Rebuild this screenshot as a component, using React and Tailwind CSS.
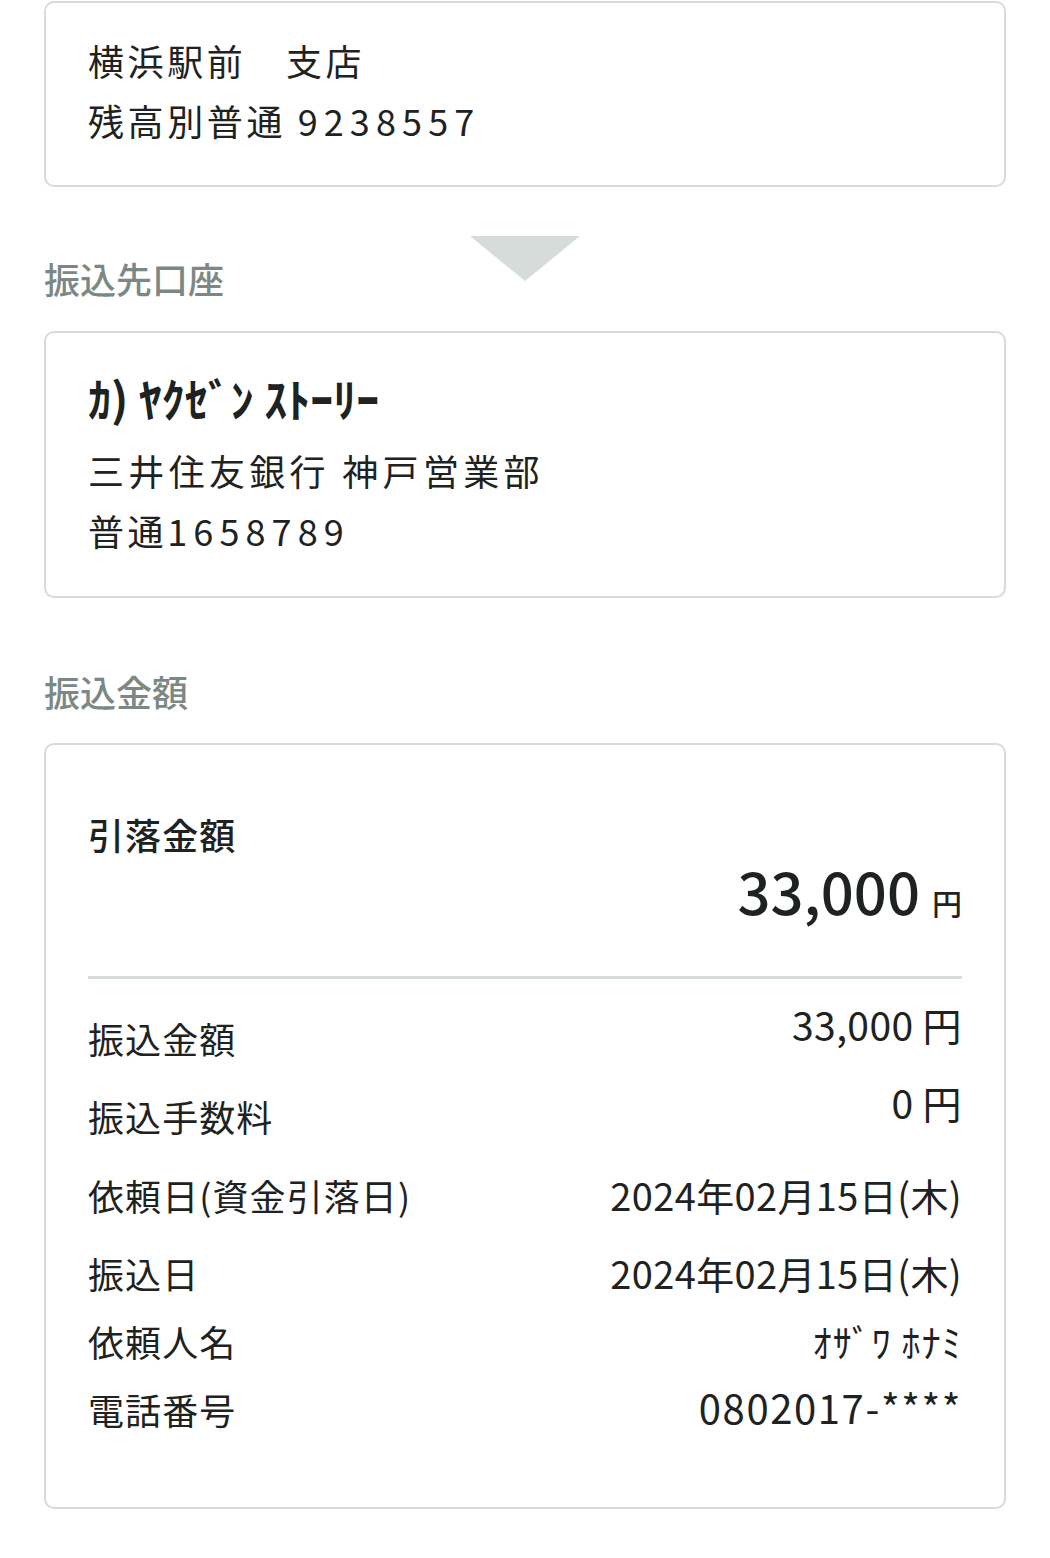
export default function App() {
  const rows = [
    { label: "振込金額", value: "33,000 円", size: "text-[39px] leading-[26px] tracking-[0.01em]", mb: "mb-[24px]" },
    { label: "振込手数料", value: "0 円", size: "text-[39px] leading-[26px] tracking-[0.01em]", mb: "mb-[25px]" },
    { label: "依頼日(資金引落日)", value: "2024年02月15日(木)", size: "text-[38px] leading-[54px] tracking-[0.01em]", mb: "mb-[24px]" },
    { label: "振込日", value: "2024年02月15日(木)", size: "text-[38px] leading-[54px] tracking-[0.01em]", mb: "mb-[14px]" },
    { label: "依頼人名", value: "ｵｻﾞﾜ ﾎﾅﾐ", size: "text-[38px] leading-[54px] tracking-[0.03em]", mb: "mb-[14px]" },
    { label: "電話番号", value: "0802017-****", size: "text-[40px] leading-[50px] tracking-[0.04em]", mb: "" },
  ];

  return (
    <div
      className="min-h-[1558px] bg-white px-[44px] pt-[1px] text-[#1e2221]"
      style={{ fontFamily: '"Noto Sans CJK JP", "Noto Sans", sans-serif' }}
    >
      {/* 振込元 */}
      <div className="rounded-[10px] border-2 border-[#d6dcda] px-[42px] pt-[27px] pb-[35px] text-[36px] leading-[60px] tracking-[0.1em]">
        <div>横浜駅前　支店</div>
        <div>
          残高別普通 <span className="tracking-[0.17em]">9238557</span>
        </div>
      </div>

      {/* 矢印 + 見出し */}
      <div className="grid h-[144px]">
        <div className="col-start-1 row-start-1 self-start justify-self-center mt-[49px] w-0 h-0 border-l-[55px] border-r-[55px] border-t-[45px] border-l-transparent border-r-transparent border-t-[#d6dcda]" />
        <div className="col-start-1 row-start-1 self-end mb-[26px] text-[36px] leading-[54px] font-medium text-[#7c8884]">
          振込先口座
        </div>
      </div>

      {/* 振込先 */}
      <div className="rounded-[10px] border-2 border-[#d6dcda] px-[42px] pt-[34px] pb-[36px]">
        <div className="text-[46px] leading-[60px] font-bold mb-[13px]">ｶ) ﾔｸｾﾞﾝ ｽﾄｰﾘｰ</div>
        <div className="text-[36px] leading-[60px] tracking-[0.12em]">三井住友銀行 神戸営業部</div>
        <div className="text-[36px] leading-[60px] tracking-[0.1em]">
          普通<span className="tracking-[0.17em]">1658789</span>
        </div>
      </div>

      <div className="mt-[66px] mb-[25px] text-[36px] leading-[54px] font-medium text-[#7c8884]">
        振込金額
      </div>

      {/* 金額 */}
      <div className="rounded-[10px] border-2 border-[#d6dcda] px-[42px] pt-[69px] pb-[71px]">
        <div className="text-[36px] leading-[40px] font-medium tracking-[0.03em]">引落金額</div>
        <div className="flex items-baseline justify-end">
          <span className="text-[58px] leading-[72px] font-medium">33,000</span>
          <span className="ml-[12px] text-[30px] font-medium">円</span>
        </div>
        <div className="mt-[50px] mb-[32px] h-[3px] bg-[#d6dcda]" />

        {rows.map((r) => (
          <div key={r.label} className={`flex items-start justify-between ${r.mb}`}>
            <span className="text-[36px] leading-[54px] tracking-[0.03em]">{r.label}</span>
            <span className={r.size}>{r.value}</span>
          </div>
        ))}
      </div>
    </div>
  );
}
